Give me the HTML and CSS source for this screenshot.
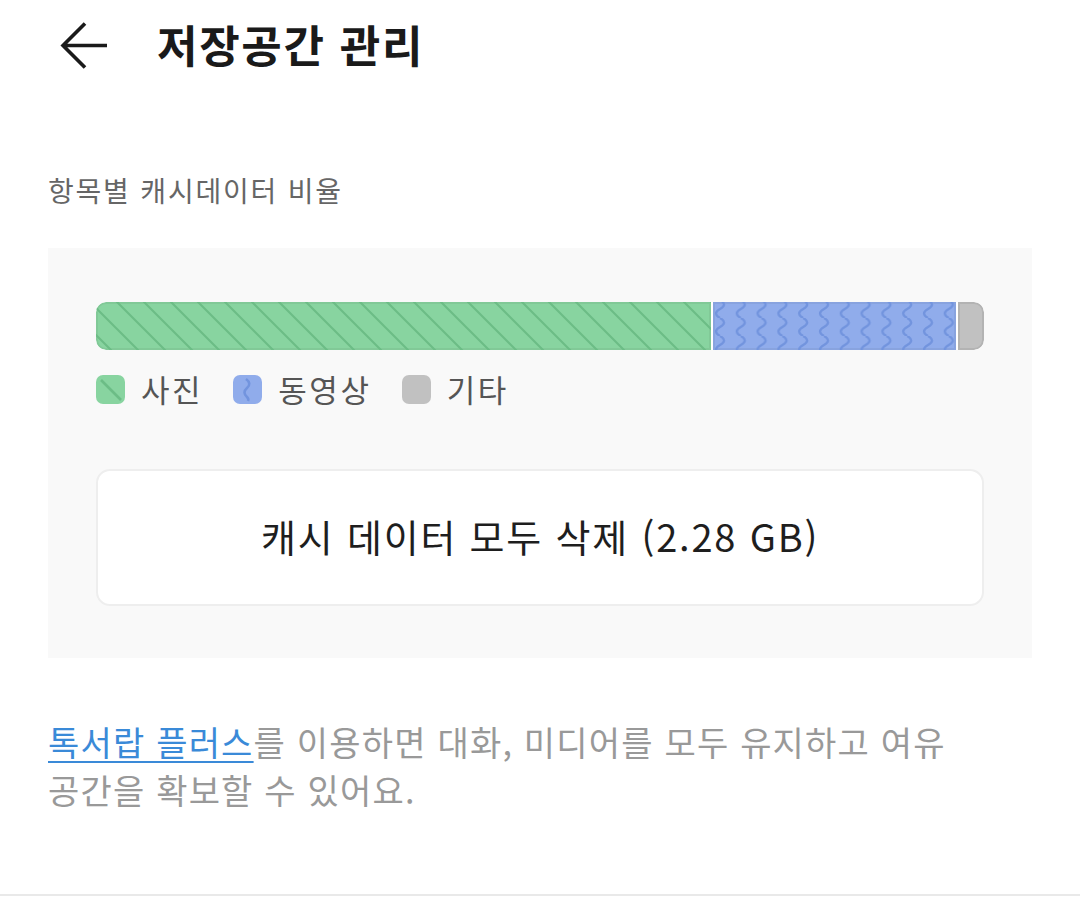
FILE: index.html
```html
<!DOCTYPE html>
<html lang="ko">
<head>
    <meta charset="UTF-8">
    <meta name="viewport" content="width=device-width, initial-scale=1.0">
    <title>저장공간 관리</title>
    <link rel="stylesheet" href="styles.css">
</head>
<body>
    <header class="topbar">
        <button class="back" aria-label="뒤로">
            <svg width="50" height="50" viewBox="0 0 50 50">
                <path d="M48 24.5H4M26 2.5L4 24.5L26 46.5" fill="none" stroke="#1a1a1a" stroke-width="3.6"/>
            </svg>
        </button>
        <h1>저장공간 관리</h1>
    </header>

    <div class="section-label">항목별 캐시데이터 비율</div>

    <section class="panel">
        <div class="bar">
            <div class="seg seg-photo" style="width: 69.3%;">
                <svg width="100%" height="100%">
                    <defs>
                        <pattern id="stripes" width="27" height="27" patternUnits="userSpaceOnUse" x="-6">
                            <path d="M-27 0L27 54M0 0L27 27M0 -27L54 27M-27 -27L27 27" stroke="#6cbd86" stroke-width="2.2"/>
                        </pattern>
                    </defs>
                    <rect width="100%" height="100%" fill="url(#stripes)"/>
                </svg>
            </div>
            <div class="seg seg-video" style="width: 27.3%;">
                <svg width="100%" height="100%">
                    <defs>
                        <pattern id="waves" width="20.8" height="18" patternUnits="userSpaceOnUse" x="-3" y="-2">
                            <path d="M10 0Q18 4.5 10 9Q2 13.5 10 18" fill="none" stroke="#7294de" stroke-width="2.4"/>
                        </pattern>
                    </defs>
                    <rect width="100%" height="100%" fill="url(#waves)"/>
                </svg>
            </div>
            <div class="seg seg-etc"></div>
        </div>

        <ul class="legend">
            <li>
                <span class="swatch swatch-photo">
                    <svg width="28" height="28" viewBox="0 0 28 28"><path d="M5 5L25 25" stroke="#6cbd86" stroke-width="2.6"/></svg>
                </span>
                사진
            </li>
            <li>
                <span class="swatch swatch-video">
                    <svg width="28" height="28" viewBox="0 0 28 28"><path d="M13 4Q19 8.5 14 13Q9 17.5 14 22Q16 24 15 26" fill="none" stroke="#7294de" stroke-width="2.6"/></svg>
                </span>
                동영상
            </li>
            <li>
                <span class="swatch swatch-etc"></span>
                기타
            </li>
        </ul>

        <button class="clear-btn">캐시 데이터 모두 삭제 (2.28 GB)</button>
    </section>

    <p class="notice"><a href="#">톡서랍 플러스</a>를 이용하면 대화, 미디어를 모두 유지하고 여유 공간을 확보할 수 있어요.</p>

    <div class="bottom-line"></div>
</body>
</html>
```

FILE: styles.css
```css
body {
    margin: 0;
    background-color: #fff;
    font-family: "Noto Sans CJK KR", "Noto Sans", sans-serif;
    width: 1080px;
    height: 906px;
    position: relative;
    overflow: hidden;
}
.topbar {
    display: flex;
    align-items: center;
    height: 92px;
    padding-left: 59px;
}
.back {
    border: none;
    background: none;
    padding: 0;
    width: 50px;
    height: 50px;
    display: flex;
}
.topbar h1 {
    margin: 0 0 4px 48px;
    font-size: 44px;
    line-height: 50px;
    font-weight: 700;
    color: #1a1a1a;
    letter-spacing: 1.7px;
}
.section-label {
    margin: 78px 48px 0;
    font-size: 28px;
    line-height: 40px;
    letter-spacing: 1.8px;
    color: #666;
}
.panel {
    margin: 38px 48px 0;
    height: 410px;
    box-sizing: border-box;
    padding: 54px 48px 0;
    background-color: #f9f9f9;
}
.bar {
    display: flex;
    gap: 2px;
    height: 48px;
    border-radius: 10px;
    overflow: hidden;
    background-color: #fff;
}
.seg {
    height: 100%;
    box-shadow: inset 0 0 0 2px rgba(0, 0, 0, 0.05);
}
.seg svg {
    display: block;
}
.seg-photo {
    background-color: #88d4a0;
    border-radius: 10px 0 0 10px;
}
.seg-video {
    background-color: #90aceb;
}
.seg-etc {
    flex: 1;
    background-color: #c1c1c1;
    border-radius: 0 10px 10px 0;
    box-shadow: inset 0 0 0 2px rgba(0, 0, 0, 0.07);
}
.legend {
    list-style: none;
    margin: 22px 0 0;
    padding: 0;
    display: flex;
    gap: 30px;
}
.legend li {
    display: flex;
    align-items: center;
    gap: 16px;
    font-size: 31px;
    line-height: 34px;
    letter-spacing: 2.6px;
    color: #555;
}
.swatch {
    width: 29px;
    height: 29px;
    border-radius: 7px;
    display: block;
    overflow: hidden;
}
.swatch svg {
    display: block;
}
.swatch-photo {
    background-color: #88d4a0;
}
.swatch-video {
    background-color: #90aceb;
}
.swatch-etc {
    background-color: #c1c1c1;
}
.clear-btn {
    display: block;
    width: 100%;
    height: 137px;
    margin-top: 63px;
    background-color: #fff;
    border: 2px solid #eee;
    border-radius: 14px;
    font-family: inherit;
    font-size: 38px;
    letter-spacing: 1.8px;
    color: #1e1e1e;
    padding: 0 0 4px;
}
.notice {
    margin: 60px 48px 0;
    font-size: 34px;
    line-height: 48px;
    letter-spacing: 1.2px;
    color: #999;
    max-width: 910px;
}
.notice a {
    color: #3a8ad8;
    text-decoration: underline;
    text-decoration-thickness: 2px;
    text-underline-offset: 5px;
}
.bottom-line {
    position: absolute;
    left: 0;
    right: 0;
    top: 894px;
    height: 2px;
    background-color: #e9e9e9;
}
```
